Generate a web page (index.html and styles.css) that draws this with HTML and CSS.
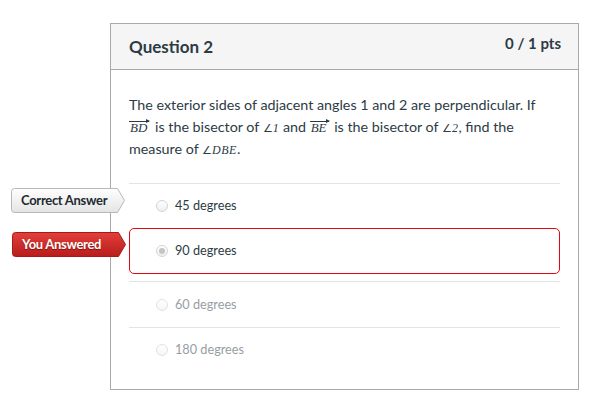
FILE: index.html
```html
<!DOCTYPE html>
<html>
<head>
<meta charset="utf-8">
<link rel="stylesheet" href="styles.css">
</head>
<body>
<div class="card">
  <div class="header">
    <h2 class="title">Question 2</h2>
    <span class="pts">0 / 1 pts</span>
  </div>
  <div class="body">
    <p class="question">The exterior sides of adjacent angles 1 and 2 are perpendicular. If<br><span class="ray">BD</span> is the bisector of <span class="ang">∠<i>1</i></span> and <span class="ray">BE</span> is the bisector of <span class="ang">∠<i>2</i></span>, find the<br>measure of <span class="ang">∠<i>DBE</i></span>.</p>
    <div class="answers">
      <div class="answer">
        <div class="flag flag-correct">
          <svg class="flag-shape" width="115" height="25" viewBox="0 0 115 25">
            <defs>
              <linearGradient id="gGray" x1="0" y1="0" x2="0" y2="1">
                <stop offset="0" stop-color="#ffffff"/>
                <stop offset="1" stop-color="#e4e4e4"/>
              </linearGradient>
            </defs>
            <path d="M3.5 0.5 H106.5 L113.5 12.5 L106.5 24.5 H3.5 Q0.5 24.5 0.5 21.5 V3.5 Q0.5 0.5 3.5 0.5 Z" fill="url(#gGray)" stroke="#b8b8b8"/>
          </svg>
          <span class="flag-text">Correct Answer</span>
        </div>
        <span class="radio"></span>
        <span class="label">45 degrees</span>
      </div>
      <div class="answer answer-wrong">
        <div class="flag flag-wrong">
          <svg class="flag-shape" width="115" height="25" viewBox="0 0 115 25">
            <defs>
              <linearGradient id="gRed" x1="0" y1="0" x2="0" y2="1">
                <stop offset="0" stop-color="#e2403a"/>
                <stop offset="1" stop-color="#b81c1c"/>
              </linearGradient>
            </defs>
            <path d="M3.5 0.5 H106.5 L113.5 12.5 L106.5 24.5 H3.5 Q0.5 24.5 0.5 21.5 V3.5 Q0.5 0.5 3.5 0.5 Z" fill="url(#gRed)" stroke="#a81a1a"/>
          </svg>
          <span class="flag-text">You Answered</span>
        </div>
        <span class="radio radio-checked"></span>
        <span class="label">90 degrees</span>
      </div>
      <div class="answer answer-muted">
        <span class="radio"></span>
        <span class="label">60 degrees</span>
      </div>
      <div class="answer answer-muted answer-last">
        <span class="radio"></span>
        <span class="label">180 degrees</span>
      </div>
    </div>
  </div>
</div>
</body>
</html>
```
FILE: styles.css
```css
html, body {
  margin: 0;
  padding: 0;
  background: #ffffff;
}
body {
  padding: 23px 0 0 110px;
  font-family: Lato, "Liberation Sans", sans-serif;
  color: #2d3b45;
}
.card {
  width: 467px;
  border: 1px solid #a9a9a9;
  background: #fff;
}
.header {
  height: 45px;
  background: #f5f5f5;
  border-bottom: 1px solid #a9a9a9;
  display: flex;
  justify-content: space-between;
  align-items: flex-start;
  padding: 0 17px 0 18px;
}
.title {
  margin: 13px 0 0 0;
  font-size: 17px;
  line-height: 20px;
  font-weight: 700;
  color: #2d3b45;
}
.pts {
  margin-top: 9px;
  font-size: 15px;
  line-height: 20px;
  font-weight: 700;
  color: #2d3b45;
}
.body {
  padding: 24px 18px 17px 18px;
}
.question {
  margin: 0;
  font-size: 14.3px;
  line-height: 22px;
  white-space: nowrap;
}
.ray {
  position: relative;
  display: inline-block;
  font-family: "Liberation Serif", serif;
  font-style: italic;
  font-size: 13px;
  line-height: 12px;
  border-top: 1px solid #2d3b45;
  padding: 0 2px 0 1px;
  margin-right: 2px;
}
.ray::after {
  content: "";
  position: absolute;
  right: -1px;
  top: -3px;
  border-left: 4px solid #2d3b45;
  border-top: 2.5px solid transparent;
  border-bottom: 2.5px solid transparent;
}
.ang {
  font-family: "Liberation Serif", serif;
  font-size: 11px;
  line-height: 1;
}
.ang i {
  font-style: italic;
  font-size: 12px;
  letter-spacing: 0.5px;
}
.answers {
  margin-top: 23px;
}
.answer {
  position: relative;
  display: flex;
  align-items: center;
  height: 44px;
  border-top: 1px solid #e4e4e4;
  padding-left: 27px;
  font-size: 12.7px;
  color: #2d3b45;
}
.answer-wrong {
  height: 44px;
  border: 1px solid #e3080f;
  border-radius: 5px;
  padding-left: 26px;
}
.answer-wrong + .answer {
  margin-top: 7px;
  height: 45px;
}
.answer-muted {
  color: #979ea3;
}
.answer-last {
  height: 44px !important;
}
.radio {
  width: 10px;
  height: 10px;
  border-radius: 50%;
  border: 1px solid #d4d4d4;
  background: linear-gradient(#ffffff, #efefef);
  margin-right: 7px;
  position: relative;
  flex: none;
}
.answer-muted .radio {
  border-color: #e2e2e2;
  background: linear-gradient(#ffffff, #f6f6f6);
}
.radio-checked::after {
  content: "";
  position: absolute;
  left: 2px;
  top: 2px;
  width: 6px;
  height: 6px;
  border-radius: 50%;
  background: #c4c4c4;
}
.label {
  line-height: 16px;
  margin-top: -2px;
}
.flag {
  position: absolute;
  left: -118px;
  top: 4px;
  width: 115px;
  height: 25px;
}
.answer-wrong .flag {
  left: -118px;
  top: 3px;
}
.flag-shape {
  position: absolute;
  left: 0;
  top: 0;
  display: block;
}
.flag-text {
  position: relative;
  display: block;
  padding-left: 10px;
  font-size: 13px;
  line-height: 25px;
  font-weight: 700;
  letter-spacing: -0.3px;
}
.flag-correct .flag-text {
  color: #222a30;
}
.flag-wrong .flag-text {
  color: #ffffff;
  text-shadow: 0 1px 1px rgba(80, 0, 0, 0.6);
}
```
